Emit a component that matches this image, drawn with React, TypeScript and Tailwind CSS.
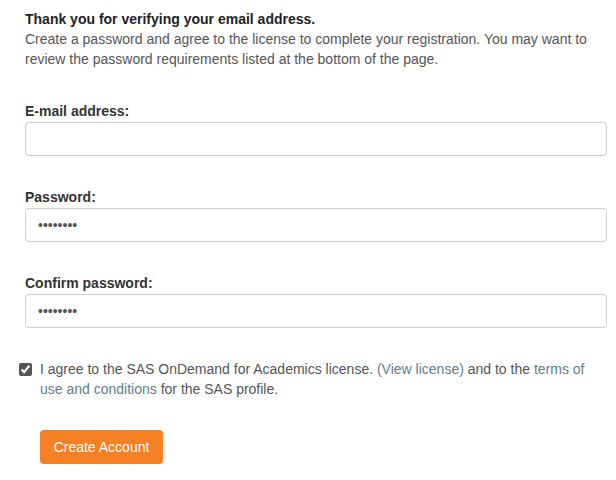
import React from "react";

export default function App() {
  const field = (label: string, value: string, type: string) => (
    <div className="mb-[31px]">
      <label className="block text-[14px] font-bold leading-[20px] text-[#333] mb-[1px]">{label}</label>
      <input
        type={type}
        defaultValue={value}
        readOnly
        className="block w-[582px] h-[34px] border border-[#ccc] rounded-[4px] px-[12px] text-[14px] text-[#555] bg-white outline-none"
      />
    </div>
  );
  return (
    <div className="w-[616px] h-[480px] bg-white font-['Liberation_Sans',Arial,sans-serif] pl-[25px] pt-[9px]">
      <div className="text-[14px] font-bold leading-[20px] text-[#222]">Thank you for verifying your email address.</div>
      <p className="text-[14px] leading-[20px] text-[#555] w-[580px]">
        Create a password and agree to the license to complete your registration. You may want to review the password requirements listed at the bottom of the page.
      </p>
      <div className="mt-[32px]">
        {field("E-mail address:", "", "text")}
        {field("Password:", "password", "password")}
        {field("Confirm password:", "password", "password")}
      </div>
      <div className="flex items-start -ml-[6px]">
        <input type="checkbox" defaultChecked className="mt-[4px] w-[13px] h-[13px] mr-[8px] accent-[#555]" />
        <p className="text-[14px] leading-[20px] text-[#555] w-[560px]">
          I agree to the SAS OnDemand for Academics license. <span className="text-[#5f7d8c]">(View license)</span> and to the <span className="text-[#5f7d8c]">terms of use and conditions</span> for the SAS profile.
        </p>
      </div>
      <button className="ml-[15px] mt-[31px] w-[123px] h-[34px] bg-[#f58025] rounded-[4px] text-white text-[14px]">
        Create Account
      </button>
    </div>
  );
}
